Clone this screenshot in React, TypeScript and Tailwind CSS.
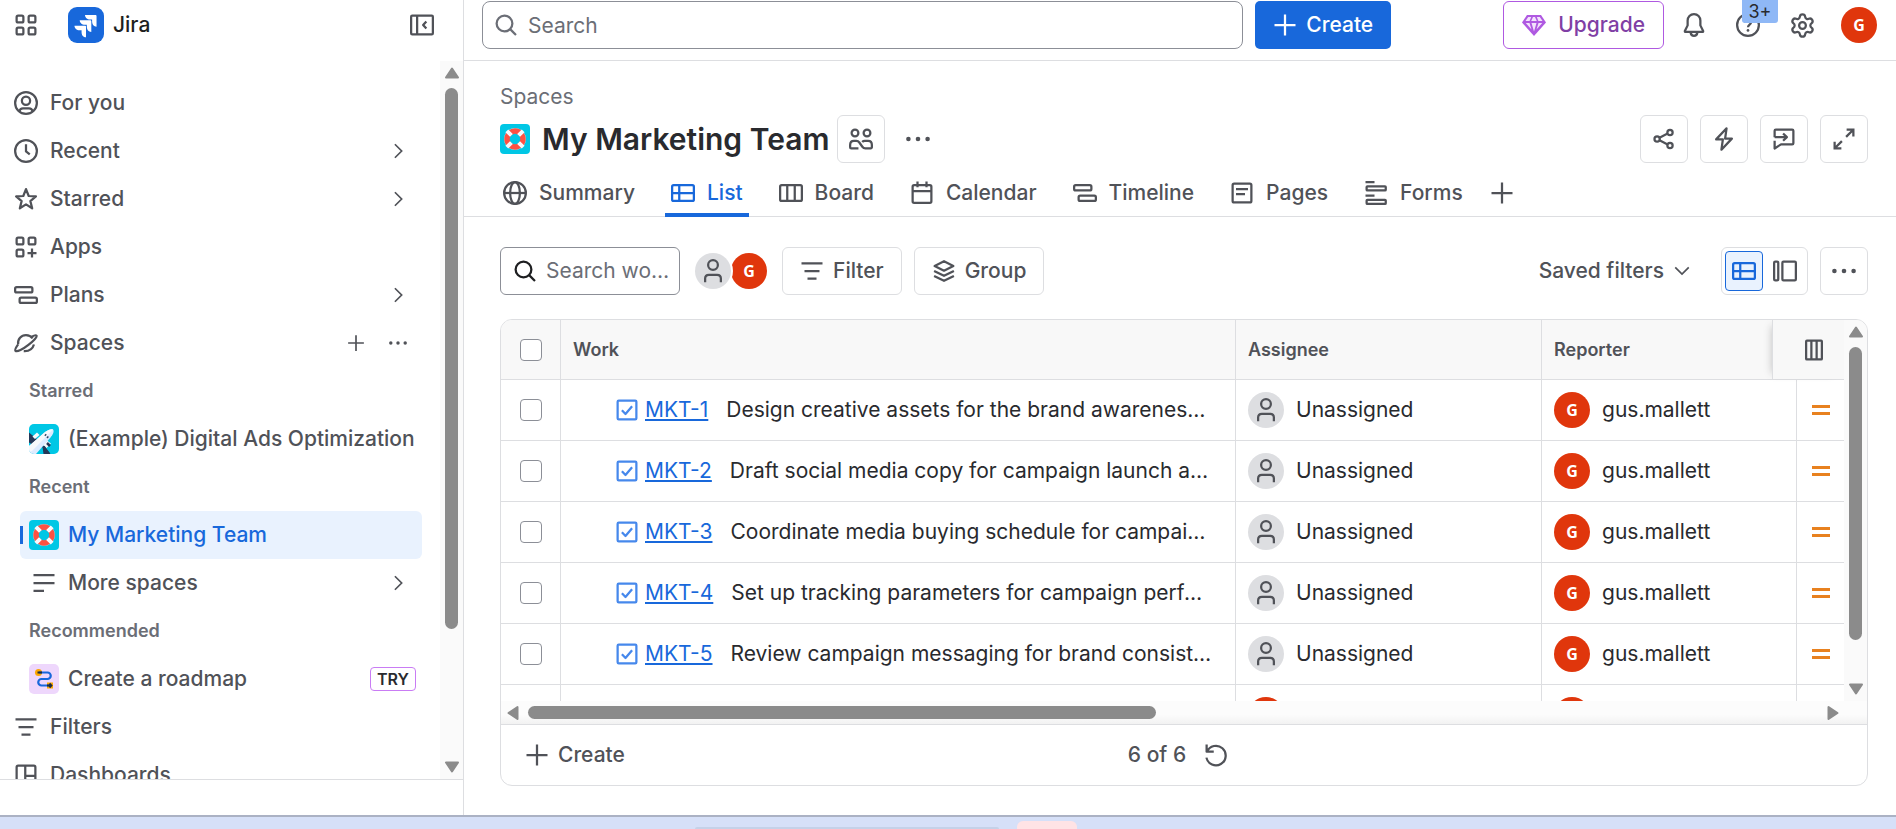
import type { ReactNode } from "react";
import clsx from "clsx";
import { Settings } from "lucide-react";

function Icon({ children, className }: { children: ReactNode; className?: string }) {
  return (
    <svg
      aria-hidden
      viewBox="0 0 16 16"
      fill="none"
      stroke="currentColor"
      strokeWidth={1.5}
      strokeLinejoin="round"
      className={clsx("shrink-0", className ?? "size-6")}
    >
      {children}
    </svg>
  );
}

const icons = {
  switcher: (
    <>
      <rect x="1.75" y="1.75" width="4.5" height="4.5" rx="1" />
      <rect x="9.75" y="1.75" width="4.5" height="4.5" rx="1" />
      <rect x="1.75" y="9.75" width="4.5" height="4.5" rx="1" />
      <rect x="9.75" y="9.75" width="4.5" height="4.5" rx="1" />
    </>
  ),
  collapse: (
    <>
      <rect x="0.75" y="1.75" width="14.5" height="12.5" rx="0.75" />
      <path d="M4.75 2v12M10.9 5.6 8.75 8l2.15 2.4" />
    </>
  ),
  personCircle: (
    <>
      <circle cx="8" cy="8" r="7.25" />
      <circle cx="8" cy="6.5" r="2.75" />
      <path d="M3.6 13.5c.3-1.5 1.2-2 2.4-2h4c1.2 0 2.1.5 2.4 2" />
    </>
  ),
  clock: (
    <>
      <circle cx="8" cy="8" r="7.25" />
      <path d="M8 3.5v4.75l2.5 2" />
    </>
  ),
  star: <path d="M8 1.4 9.8 6l4.8.3-3.7 3.1 1.2 4.8L8 11.6l-4.1 2.6 1.2-4.8L1.4 6.3 6.2 6z" />,
  apps: (
    <>
      <rect x="1.75" y="1.75" width="4.5" height="4.5" rx="1" />
      <rect x="9.75" y="1.75" width="4.5" height="4.5" rx="1" />
      <rect x="1.75" y="9.75" width="4.5" height="4.5" rx="1" />
      <path d="M12 9v6M9 12h6" />
    </>
  ),
  timeline: (
    <>
      <rect x="0.75" y="2.75" width="11.5" height="3.5" rx="1" />
      <rect x="3.75" y="9.75" width="11.5" height="3.5" rx="1" />
    </>
  ),
  planet: (
    <>
      <path d="M2.75 8.9C2.3 5.4 4.8 2.75 8 2.75c1.9 0 3.4.8 4.4 2.2" />
      <path d="M2.75 8.9C1.3 11 .3 12.6 1 13.2c1 .9 5-1 8.6-3.9 3.6-2.8 6-5.4 5.4-6.2-.4-.5-1.7-.1-3.2.7" />
      <path d="M6.5 13.4c3.2.2 5.9-1.3 6.8-4.4" />
    </>
  ),
  plus: <path d="M8 1v14M1 8h14" />,
  lines: <path d="M1 2.75h14M1 8h14M1 13.25h7" />,
  filter: <path d="M1 2.9h14M3 8h10M5 13.1h6" />,
  dashboard: (
    <>
      <rect x="1.75" y="1.75" width="12.5" height="12.5" rx="1" />
      <path d="M7.5 2v12M7.5 8.5h6.5" />
    </>
  ),
  search: (
    <>
      <circle cx="7" cy="7" r="5.25" />
      <path d="m10.75 10.75 3.9 3.9" />
    </>
  ),
  bell: (
    <>
      <path d="M8 .75c-2.5 0-4.25 1.9-4.25 4.3v3.2L1.9 12v.5h12.2V12l-1.85-3.75v-3.2C12.25 2.65 10.5.75 8 .75Z" />
      <path d="M5.75 13c.2 1.4 1.1 2.25 2.25 2.25S10.05 14.4 10.25 13" />
    </>
  ),
  help: (
    <>
      <circle cx="8" cy="8" r="7.25" />
      <path d="M6 6.4c0-1.2.9-1.9 2-1.9s2 .7 2 1.8C10 7.7 8 7.9 8 9.5" />
      <circle cx="8" cy="11.6" r="0.9" fill="currentColor" stroke="none" />
    </>
  ),
  people: (
    <>
      <circle cx="4" cy="4" r="2.25" />
      <circle cx="12" cy="4" r="2.25" />
      <path d="M6.3 14.25H1.5a.75.75 0 0 1-.75-.75V12c0-1.6 1-2.75 2.5-2.75H4.9c.9 0 1.5.4 2 1.1l2 2.8c.5.7 1.1 1.1 2 1.1h3.6a.75.75 0 0 0 .75-.75V12c0-1.6-1-2.75-2.5-2.75h-2.2c-.7 0-1.3.2-1.75.7" />
    </>
  ),
  share: (
    <>
      <circle cx="3.4" cy="8" r="1.75" />
      <circle cx="12" cy="3.6" r="1.75" />
      <circle cx="12" cy="12.4" r="1.75" />
      <path d="m5 7.2 5.4-2.8M5 8.8l5.4 2.8" />
    </>
  ),
  bolt: <path d="M9.7.9 2.75 8.25h4.5L6.3 15.1l6.95-7.35h-4.5z" />,
  feedback: (
    <>
      <path d="M1.75 6.75v-4.2c0-.5.3-.8.8-.8h10.9c.5 0 .8.3.8.8v8.2c0 .5-.3.8-.8.8H6L1.75 14.3V9.2" />
      <path d="M1.75 6.75h8M7.4 4.3l2.5 2.45-2.5 2.45" />
    </>
  ),
  expand: <path d="m9.4 6.6 4.6-4.6M9.75 1.75h4.5v4.5M6.6 9.4 2 14M1.75 9.75v4.5h4.5" strokeLinejoin="miter" />,
  globe: (
    <>
      <circle cx="8" cy="8" r="7.25" />
      <ellipse cx="8" cy="8" rx="3.25" ry="7.25" />
      <path d="M.75 8h14.5" />
    </>
  ),
  list: (
    <>
      <rect x="0.75" y="2.75" width="14.5" height="10.5" rx="1" />
      <path d="M1 8h14M5.5 3v10" />
    </>
  ),
  board: (
    <>
      <rect x="0.75" y="2.75" width="14.5" height="10.5" rx="1" />
      <path d="M5.5 3v10M10.5 3v10" />
    </>
  ),
  calendar: (
    <>
      <rect x="1.75" y="2.75" width="12.5" height="11.75" rx="1" />
      <path d="M2 6.75h12M5 .3v3.9M11 .3v3.9" />
    </>
  ),
  pages: (
    <>
      <rect x="1.75" y="1.75" width="12.5" height="12.5" rx="1" />
      <path d="M4 5.4h8M4 8.7h6" />
    </>
  ),
  forms: (
    <>
      <path d="M1 .75h6M1 9.75h6" />
      <rect x="1.75" y="3.5" width="12.75" height="2.75" rx="0.5" />
      <rect x="1.75" y="12.5" width="12.75" height="2.75" rx="0.5" />
    </>
  ),
  layers: <path d="M8 1.5 14.25 4.6 8 7.8 1.75 4.6zM1.4 8 8 11.2 14.6 8M1.4 11.3 8 14.5l6.6-3.2" />,
  detail: (
    <>
      <rect x="0.75" y="1.75" width="2.75" height="12.5" rx="0.75" />
      <rect x="6.25" y="1.75" width="9" height="12.5" rx="0.75" />
    </>
  ),
  columns: (
    <>
      <rect x="2.75" y="1.75" width="10.5" height="12.5" rx="0.5" />
      <path d="M6.25 2v12M9.75 2v12" />
    </>
  ),
  person: (
    <>
      <circle cx="8" cy="4" r="3.25" />
      <path d="M2.75 15.5V13c0-1.4 1-2.5 2.5-2.5h5.5c1.5 0 2.5 1.1 2.5 2.5v2.5" />
    </>
  ),
  refresh: <path d="M1.75 1v4.75H6.5M2 5.75a6.5 6.5 0 1 1-.4 4" />,
};

function Chevron({ down }: { down?: boolean }) {
  return (
    <Icon className="size-[18px]">
      {down ? (
        <path d="M2 4.75 8 10.75l6-6" strokeLinejoin="miter" />
      ) : (
        <path d="m5.25 2 6 6-6 6" strokeLinejoin="miter" />
      )}
    </Icon>
  );
}

function Dots({ small }: { small?: boolean }) {
  return (
    <svg aria-hidden viewBox="0 0 24 24" fill="currentColor" className={clsx("shrink-0", small ? "size-[18px]" : "size-6")}>
      <circle cx="2.4" cy="12" r="2.3" />
      <circle cx="12" cy="12" r="2.3" />
      <circle cx="21.6" cy="12" r="2.3" />
    </svg>
  );
}

function Arrow({ d }: { d: string }) {
  return (
    <svg aria-hidden viewBox="0 0 16 16" className="size-4 shrink-0 fill-[#8b8b8b] stroke-[#8b8b8b]" strokeWidth={2} strokeLinejoin="round">
      <path d={d} />
    </svg>
  );
}

const arrows = {
  up: "M8 3.5 14 12.5H2z",
  down: "M8 12.5 2 3.5h12z",
  left: "M3.5 8 12.5 2v12z",
  right: "M12.5 8 3.5 2v12z",
};

function Lifebuoy() {
  return (
    <svg aria-hidden viewBox="0 0 30 30" className="size-[30px] shrink-0 rounded">
      <rect width="30" height="30" fill="#00c7e5" />
      <circle cx="15" cy="15" r="10.6" fill="none" stroke="#b9eef7" strokeWidth="0.8" />
      <circle cx="15" cy="15" r="8" fill="none" stroke="#ff5143" strokeWidth="5.4" />
      <path d="m6.8 6.8 4.6 4.6M23.2 6.8l-4.6 4.6M6.8 23.2l4.6-4.6M23.2 23.2l-4.6-4.6" stroke="#f7f9fc" strokeWidth="4" />
    </svg>
  );
}

function Plane() {
  return (
    <svg aria-hidden viewBox="0 0 30 30" className="size-[30px] shrink-0 rounded-[5px]">
      <rect width="30" height="30" fill="#00c7e5" />
      <path d="M0 8.5 9 16l-5 5-4-2.5zM13 20l8.5 10h-7z" fill="#253858" />
      <path d="m3.5 12.5 4.5-4 2.5 2.5L6 15zM14 21l4-4.5 4 3-4.5 4.5z" fill="#f7f9fc" />
      <path d="M0 22 15.5 8.5C18.5 6 22 4.5 24 5.5c1.5 1.5 0 5-2.5 8L7 30H0z" fill="#deebff" />
      <path d="M0 22 15.5 8.5C18.5 6 22 4.5 24 5.5L3 27l-3 1z" fill="#f7f9fc" />
      <path d="m16 10.5 3.5 3.5" stroke="#344563" strokeWidth="2" strokeDasharray="1.5 1.5" />
      <path d="m14.5 22.5 5.5 7.5M18 19l3 3" stroke="#253858" strokeWidth="2.5" />
    </svg>
  );
}

function Roadmap() {
  return (
    <svg aria-hidden viewBox="0 0 30 30" className="size-[30px] shrink-0 rounded-[5px]">
      <rect width="30" height="30" fill="#eed7fc" />
      <circle cx="9.5" cy="8.5" r="3.5" fill="#fca700" />
      <rect x="18" y="18.5" width="6" height="6" fill="#fca700" />
      <path d="M10 8.5h8.5a3 3 0 0 1 0 6.5h-6a3.2 3.2 0 0 0 0 6.5H20" fill="none" stroke="#1868db" strokeWidth="2.2" />
      <path d="M8.5 8.5H13M18 21.5h4.5m-2-2 2 2-2 2" fill="none" stroke="#1c2b42" strokeWidth="1.8" />
    </svg>
  );
}

function Gem() {
  return (
    <svg aria-hidden viewBox="0 0 24 24" className="size-6 shrink-0">
      <path d="M5 2h14l5 7.5L12 23 0 9.5z" fill="#af59e1" />
      <path
        d="M6.2 4h3L7.6 8H3.5zM11 4h2l1.8 4H9.2zM14.8 4h3l2.7 4h-4.1zM3.8 10h3.7l2 6.5zM9.5 10h5L12 18.5zM16.5 10h3.7l-5.7 6.5z"
        fill="#f3e2fc"
      />
    </svg>
  );
}

function Avatar() {
  return (
    <span className="flex size-9 shrink-0 items-center justify-center rounded-full bg-[#e0360c] font-['Open_Sans',sans-serif] text-base leading-none font-bold text-white">
      G
    </span>
  );
}

function Unassigned() {
  return (
    <span className="flex size-9 shrink-0 items-center justify-center rounded-full bg-[#dddee1] text-[#505258]">
      <Icon>{icons.person}</Icon>
    </span>
  );
}

function NavRow({ icon, label, children }: { icon: ReactNode; label: string; children?: ReactNode }) {
  return (
    <li className="flex h-12 items-center pr-[33px] pl-3.5">
      <a href="#" className="flex flex-1 items-center gap-3">
        <Icon>{icon}</Icon>
        {label}
      </a>
      {children}
    </li>
  );
}

function NavHeading({ children }: { children: ReactNode }) {
  return <li className="flex h-12 items-center pl-[29px] text-lg font-semibold text-[#6b6e76]">{children}</li>;
}

function SpaceRow({ icon, label, selected, children }: { icon: ReactNode; label: string; selected?: boolean; children?: ReactNode }) {
  return (
    <li
      className={clsx(
        "relative ml-5 mr-[18px] flex h-12 items-center rounded-md pl-[9px]",
        selected && "bg-[#e9f2fe] text-[#1868db]",
      )}
    >
      {selected && <span className="absolute left-0 h-[18px] w-[3px] bg-[#1868db]" />}
      <a href="#" className="flex flex-1 items-center gap-[9px] whitespace-nowrap">
        <span className="flex size-[30px] shrink-0 items-center justify-center">{icon}</span>
        {label}
      </a>
      {children}
    </li>
  );
}

function Sidebar() {
  return (
    <aside className="flex w-[464px] shrink-0 flex-col border-r border-[#dddee1]">
      <div className="flex h-[61px] shrink-0 items-start pt-[7px] pr-[29px] pl-3.5">
        <button type="button" aria-label="Switch apps" className="flex h-9 items-center">
          <Icon>{icons.switcher}</Icon>
        </button>
        <a href="#" className="ml-[30px] flex h-9 items-center gap-[9px] text-[#1e1f21]">
          <svg aria-hidden viewBox="0 0 24 24" className="size-9 rounded-[9px]">
            <rect width="24" height="24" fill="#1868db" />
            <path
              fill="#fff"
              d="M9.051 15.434H7.734c-1.988 0-3.413-1.218-3.413-3h7.085c.367 0 .605.26.605.63v7.13c-1.772 0-2.96-1.435-2.96-3.434zm3.5-3.543h-1.318c-1.987 0-3.413-1.196-3.413-2.978h7.085c.367 0 .627.239.627.608v7.13c-1.772 0-2.981-1.435-2.981-3.434zm3.52-3.522h-1.317c-1.987 0-3.413-1.217-3.413-3h7.085c.367 0 .605.262.605.61v7.129c-1.771 0-2.96-1.435-2.96-3.434z"
            />
          </svg>
          Jira
        </a>
        <button type="button" aria-label="Collapse sidebar" className="ml-auto flex h-9 items-center">
          <Icon>{icons.collapse}</Icon>
        </button>
      </div>
      <div className="flex min-h-0 flex-1">
        <nav className="min-w-0 flex-1 overflow-hidden pt-[18px]">
          <ul>
            <NavRow icon={icons.personCircle} label="For you" />
            <NavRow icon={icons.clock} label="Recent">
              <Chevron />
            </NavRow>
            <NavRow icon={icons.star} label="Starred">
              <Chevron />
            </NavRow>
            <NavRow icon={icons.apps} label="Apps" />
            <NavRow icon={icons.timeline} label="Plans">
              <Chevron />
            </NavRow>
            <NavRow icon={icons.planet} label="Spaces">
              <button type="button" aria-label="Create space" className="mr-6">
                <Icon className="size-[18px]">{icons.plus}</Icon>
              </button>
              <button type="button" aria-label="More space actions">
                <Dots small />
              </button>
            </NavRow>
            <NavHeading>Starred</NavHeading>
            <SpaceRow icon={<Plane />} label="(Example) Digital Ads Optimization" />
            <NavHeading>Recent</NavHeading>
            <SpaceRow icon={<Lifebuoy />} label="My Marketing Team" selected />
            <SpaceRow icon={<Icon>{icons.lines}</Icon>} label="More spaces">
              <span className="mr-[15px]">
                <Chevron />
              </span>
            </SpaceRow>
            <NavHeading>Recommended</NavHeading>
            <SpaceRow icon={<Roadmap />} label="Create a roadmap">
              <span className="mr-1.5 flex h-6 items-center rounded border border-[#c97cf4] px-1.5 text-base font-semibold text-[#292a2e]">
                TRY
              </span>
            </SpaceRow>
            <NavRow icon={icons.filter} label="Filters" />
            <NavRow icon={icons.dashboard} label="Dashboards" />
          </ul>
        </nav>
        <div className="flex w-[23px] flex-col items-center bg-[#fafafa] py-1">
          <Arrow d={arrows.up} />
          <div className="mt-[7px] h-[541px] w-[13px] rounded-full bg-[#8b8b8b]" />
          <span className="mt-auto flex">
            <Arrow d={arrows.down} />
          </span>
        </div>
      </div>
      <div className="h-9 shrink-0 border-t border-[#dddee1]" />
    </aside>
  );
}

function TopBar() {
  return (
    <header className="flex h-[61px] shrink-0 items-start border-b border-[#dddee1] pt-px pr-2.5 pl-[18px]">
      <label className="flex h-12 flex-1 items-center gap-2.5 rounded-lg border border-[#8c8f97] pl-[11px] text-[#6b6e76]">
        <Icon>{icons.search}</Icon>
        <input
          type="search"
          aria-label="Search"
          placeholder="Search"
          className="h-full w-full min-w-0 bg-transparent font-normal outline-none placeholder:text-[#6b6e76]"
        />
      </label>
      <button type="button" className="ml-3 flex h-12 items-center gap-[9px] rounded-[5px] bg-[#1868db] px-[18px] text-white">
        <Icon>{icons.plus}</Icon>
        Create
      </button>
      <button
        type="button"
        className="ml-28 flex h-12 items-center gap-3 rounded-md border border-[#af59e1] px-[18px] text-[#803fa5]"
      >
        <Gem />
        Upgrade
      </button>
      <div className="ml-1.5 flex gap-1.5">
        <button type="button" aria-label="Notifications" className="flex size-12 items-center justify-center">
          <Icon>{icons.bell}</Icon>
        </button>
        <button type="button" aria-label="Help" className="relative flex size-12 items-center justify-center">
          <Icon>{icons.help}</Icon>
          <span className="absolute -top-px left-[18px] flex h-[23px] w-9 items-center justify-center rounded-b-[3px] bg-[#8fb8f6] text-lg font-normal text-[#292a2e]">
            3+
          </span>
        </button>
        <button type="button" aria-label="Settings" className="flex size-12 items-center justify-center">
          <Settings className="size-[27px]" strokeWidth={2} />
        </button>
        <button type="button" aria-label="Account" className="flex h-12 w-[54px] items-center justify-center">
          <Avatar />
        </button>
      </div>
    </header>
  );
}

const tabs = [
  { label: "Summary", icon: icons.globe },
  { label: "List", icon: icons.list },
  { label: "Board", icon: icons.board },
  { label: "Calendar", icon: icons.calendar },
  { label: "Timeline", icon: icons.timeline },
  { label: "Pages", icon: icons.pages },
  { label: "Forms", icon: icons.forms },
];

function OutlineButton({ label, children }: { label: string; children: ReactNode }) {
  return (
    <button
      type="button"
      aria-label={label}
      className="flex size-12 shrink-0 items-center justify-center rounded-md border border-[#dddee1]"
    >
      {children}
    </button>
  );
}

function SpaceHeader() {
  return (
    <div className="shrink-0">
      <div className="pt-[21px] pr-7 pl-9">
        <a href="#" className="flex h-[30px] items-center font-normal text-[#6b6e76]">
          Spaces
        </a>
        <div className="mt-[3px] flex h-12 items-center">
          <Lifebuoy />
          <h1 className="ml-3 text-[30px] leading-9 font-semibold text-[#292a2e]">My Marketing Team</h1>
          <div className="ml-2 flex items-center gap-[21px]">
            <OutlineButton label="Team">
              <Icon>{icons.people}</Icon>
            </OutlineButton>
            <button type="button" aria-label="More actions">
              <Dots />
            </button>
          </div>
          <div className="ml-auto flex gap-3">
            <OutlineButton label="Share">
              <Icon>{icons.share}</Icon>
            </OutlineButton>
            <OutlineButton label="Automation">
              <Icon>{icons.bolt}</Icon>
            </OutlineButton>
            <OutlineButton label="Give feedback">
              <Icon>{icons.feedback}</Icon>
            </OutlineButton>
            <OutlineButton label="Full screen">
              <Icon>{icons.expand}</Icon>
            </OutlineButton>
          </div>
        </div>
      </div>
      <div className="mt-1.5 flex h-12 items-stretch border-b border-[#dddee1] pl-[33px]">
        <nav className="flex gap-6">
          {tabs.map((tab) => (
            <a
              key={tab.label}
              href="#"
              className={clsx(
                "-mb-px flex items-center gap-3 border-b-4 px-1.5 pt-1",
                tab.label === "List" ? "border-[#1868db] text-[#1868db]" : "border-transparent",
              )}
            >
              <Icon>{tab.icon}</Icon>
              {tab.label}
            </a>
          ))}
        </nav>
        <button type="button" aria-label="Add view" className="ml-[21px] flex items-center">
          <Icon>{icons.plus}</Icon>
        </button>
      </div>
    </div>
  );
}

function Toolbar() {
  return (
    <div className="mt-[30px] flex h-12 shrink-0 items-center">
      <label className="flex h-12 w-[180px] items-center gap-[9px] rounded-md border border-[#8c8f97] pr-1.5 pl-3 text-[#1e1f21]">
        <Icon>{icons.search}</Icon>
        <input
          type="text"
          aria-label="Search work items"
          placeholder="Search work items"
          className="w-full min-w-0 bg-transparent font-normal text-ellipsis outline-none placeholder:text-[#6b6e76]"
        />
      </label>
      <div className="ml-[15px] flex items-center">
        <span className="relative z-10 rounded-full ring-2 ring-white">
          <Unassigned />
        </span>
        <Avatar />
      </div>
      <button type="button" className="ml-[15px] flex h-12 items-center gap-[9px] rounded-md border border-[#dddee1] px-[17px]">
        <Icon>{icons.filter}</Icon>
        Filter
      </button>
      <button type="button" className="ml-3 flex h-12 items-center gap-[9px] rounded-md border border-[#dddee1] px-[17px]">
        <Icon>{icons.layers}</Icon>
        Group
      </button>
      <button type="button" className="mr-[30px] ml-auto flex items-center gap-[9px]">
        Saved filters
        <Chevron down />
      </button>
      <div className="mr-3 flex h-12 items-center gap-[3px] rounded-md border border-[#dddee1] px-[3px]">
        <button
          type="button"
          aria-label="List view"
          className="flex h-10 w-[38px] items-center justify-center rounded border border-[#1868db] bg-[#e9f2fe] text-[#1868db]"
        >
          <Icon>{icons.list}</Icon>
        </button>
        <button type="button" aria-label="Detail view" className="flex h-10 w-[38px] items-center justify-center">
          <Icon>{icons.detail}</Icon>
        </button>
      </div>
      <OutlineButton label="More view actions">
        <Dots />
      </OutlineButton>
    </div>
  );
}

const rows = [
  { key: "MKT-1", summary: "Design creative assets for the brand awareness campaign", reporter: "gus.mallett" },
  { key: "MKT-2", summary: "Draft social media copy for campaign launch announcement", reporter: "gus.mallett" },
  { key: "MKT-3", summary: "Coordinate media buying schedule for campaign rollout", reporter: "gus.mallett" },
  { key: "MKT-4", summary: "Set up tracking parameters for campaign performance", reporter: "gus.mallett" },
  { key: "MKT-5", summary: "Review campaign messaging for brand consistency", reporter: "gus.mallett" },
];

function CheckBox({ label }: { label: string }) {
  return (
    <input
      type="checkbox"
      aria-label={label}
      className="mx-auto block size-[22px] appearance-none rounded border border-[#8c8f97] bg-white"
    />
  );
}

const cell = "border-r border-b border-[#dddee1] p-0";

function WorkTable() {
  return (
    <div className="min-h-0 min-w-0 flex-1 overflow-hidden">
      <table className="w-full table-fixed border-separate border-spacing-0">
        <colgroup>
          <col className="w-[60px]" />
          <col />
          <col className="w-[306px]" />
          <col className="w-[255px]" />
          <col className="w-[47px]" />
        </colgroup>
        <thead>
          <tr className="h-[60px] bg-[#f8f8f8] text-left text-lg">
            <th className={cell}>
              <CheckBox label="Select all" />
            </th>
            <th className={clsx(cell, "pl-3 font-semibold")}>Work</th>
            <th className={clsx(cell, "pl-3 font-semibold")}>Assignee</th>
            <th className="border-b border-[#dddee1] p-0 pl-3 font-semibold">Reporter</th>
            <th className="relative border-b border-[#dddee1] p-0">
              <button
                type="button"
                aria-label="Configure columns"
                className="absolute top-0 right-0 flex h-[59px] w-[72px] items-center justify-center border-l border-[#dddee1] bg-[#f8f8f8] pl-2.5 shadow-[-6px_0_8px_-6px_#1e1f2140]"
              >
                <Icon>{icons.columns}</Icon>
              </button>
            </th>
          </tr>
        </thead>
        <tbody className="font-normal text-[#292a2e]">
          {rows.map((row) => (
            <tr key={row.key} className="h-[61px]">
              <td className={cell}>
                <CheckBox label={`Select ${row.key}`} />
              </td>
              <td className={cell}>
                <div className="flex items-center pr-[22px] pl-[54px]">
                  <Icon className="size-6 text-[#4688ec]">
                    <rect x="1.75" y="1.75" width="12.5" height="12.5" rx="0.75" />
                    <path d="m4.6 8.2 2.4 2.5 4.4-5.2" />
                  </Icon>
                  <a href="#" className="ml-1.5 shrink-0 whitespace-nowrap text-[#1868db] underline decoration-2 underline-offset-2">
                    {row.key}
                  </a>
                  <span className="ml-[18px] truncate">{row.summary}</span>
                </div>
              </td>
              <td className={cell}>
                <div className="flex items-center gap-3 pl-3">
                  <Unassigned />
                  Unassigned
                </div>
              </td>
              <td className={cell}>
                <div className="flex items-center gap-3 pl-3">
                  <Avatar />
                  {row.reporter}
                </div>
              </td>
              <td className="border-b border-[#dddee1] p-0">
                <div role="img" aria-label="Medium priority" className="ml-[15px] flex w-[18px] flex-col gap-1">
                  <span className="h-[3px] bg-[#e8811f]" />
                  <span className="h-[3px] bg-[#e8811f]" />
                </div>
              </td>
            </tr>
          ))}
          <tr className="h-[61px]">
            <td className={cell} />
            <td className={cell} />
            <td className={cell}>
              <div className="pl-3">
                <Avatar />
              </div>
            </td>
            <td className={cell}>
              <div className="pl-3">
                <Avatar />
              </div>
            </td>
            <td className="border-b border-[#dddee1] p-0" />
          </tr>
        </tbody>
      </table>
    </div>
  );
}

function WorkList() {
  return (
    <section className="mt-6 mb-[29px] flex min-h-0 flex-1 flex-col overflow-hidden rounded-xl border border-[#dddee1]">
      <div className="flex min-h-0 flex-1">
        <WorkTable />
        <div className="flex w-[23px] shrink-0 flex-col items-center bg-[#fafafa] py-1">
          <Arrow d={arrows.up} />
          <div className="mt-[7px] h-[293px] w-[13px] rounded-full bg-[#8b8b8b]" />
          <span className="mt-auto flex">
            <Arrow d={arrows.down} />
          </span>
        </div>
      </div>
      <div className="flex h-[23px] shrink-0 items-center bg-linear-to-b from-[#fcfcfc] from-60% to-[#f2f2f2] pr-[26px] pl-1">
        <Arrow d={arrows.left} />
        <div className="ml-[7px] h-[13px] w-[47%] rounded-full bg-[#8b8b8b]" />
        <span className="ml-auto flex">
          <Arrow d={arrows.right} />
        </span>
      </div>
      <footer className="grid h-[61px] shrink-0 grid-cols-3 items-center border-t border-[#dddee1] pr-3">
        <button type="button" className="flex items-center gap-[9px] pl-6">
          <Icon>{icons.plus}</Icon>
          Create
        </button>
        <div className="flex items-center justify-center gap-[18px]">
          6 of 6
          <button type="button" aria-label="Refresh">
            <Icon>{icons.refresh}</Icon>
          </button>
        </div>
      </footer>
    </section>
  );
}

export default function App() {
  return (
    <div className="flex h-screen flex-col overflow-hidden bg-white font-[Inter,sans-serif] text-[21px] leading-[30px] font-medium text-[#505258]">
      <div className="flex min-h-0 flex-1">
        <Sidebar />
        <main className="flex min-w-0 flex-1 flex-col">
          <TopBar />
          <SpaceHeader />
          <div className="flex min-h-0 flex-1 flex-col pr-7 pl-9">
            <Toolbar />
            <WorkList />
          </div>
        </main>
      </div>
      <div className="flex h-3.5 shrink-0 items-end gap-[18px] border-t-2 border-[#abb2c4] bg-[#d6e0f8] pl-[695px]">
        <div className="h-0.5 w-[304px] rounded-t bg-[#c5d1e8]" />
        <div className="h-2 w-[60px] rounded-t-md bg-[#ffe3e5]" />
      </div>
    </div>
  );
}
